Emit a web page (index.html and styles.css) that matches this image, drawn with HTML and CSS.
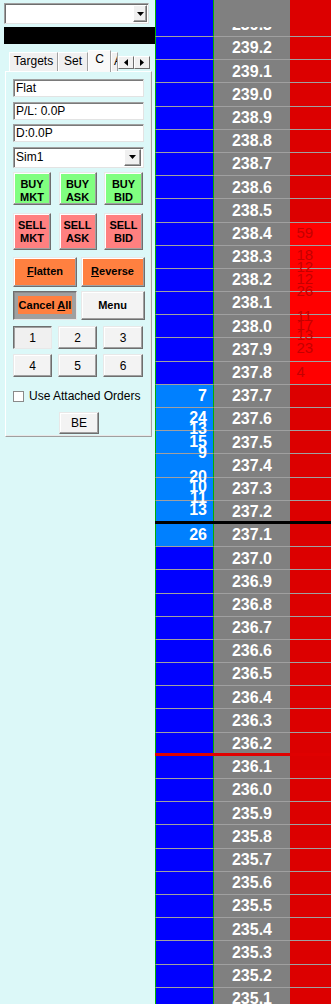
FILE: index.html
```html
<!DOCTYPE html>
<html>
<head>
<meta charset="utf-8">
<link rel="stylesheet" href="styles.css">
</head>
<body>
<div class="app">
  <aside class="side">
    <div class="combo combo--top">
      <span class="combo-text"></span>
      <span class="combo-btn"><svg width="7" height="4" viewBox="0 0 7 4"><path d="M0 0H7L3.5 4Z"/></svg></span>
    </div>
    <div class="blackbar"></div>
    <div class="tabs">
      <div class="tabstrip">
        <div class="tab tab--targets">Targets</div>
        <div class="tab tab--set">Set</div>
        <div class="tab tab--active">C</div>
        <div class="tab tab--clip">A</div>
        <div class="tab-scroll">
          <span class="scroll-btn"><svg width="4" height="7" viewBox="0 0 4 7"><path d="M4 0V7L0 3.5Z"/></svg></span>
          <span class="scroll-btn"><svg width="4" height="7" viewBox="0 0 4 7"><path d="M0 0V7L4 3.5Z"/></svg></span>
        </div>
      </div>
      <div class="panel">
        <div class="field">Flat</div>
        <div class="field">P/L: 0.0P</div>
        <div class="field">D:0.0P</div>
        <div class="combo combo--acct">
          <span class="combo-text">Sim1</span>
          <span class="combo-btn"><svg width="7" height="4" viewBox="0 0 7 4"><path d="M0 0H7L3.5 4Z"/></svg></span>
        </div>
        <div class="grid3 row-buy">
          <div class="btn btn--buy">BUY<br>MKT</div>
          <div class="btn btn--buy">BUY<br>ASK</div>
          <div class="btn btn--buy">BUY<br>BID</div>
        </div>
        <div class="grid3 row-sell">
          <div class="btn btn--sell">SELL<br>MKT</div>
          <div class="btn btn--sell">SELL<br>ASK</div>
          <div class="btn btn--sell">SELL<br>BID</div>
        </div>
        <div class="grid2 row-flatten">
          <div class="btn btn--orange btn--single"><span><u>F</u>latten</span></div>
          <div class="btn btn--orange btn--single"><span><u>R</u>everse</span></div>
        </div>
        <div class="grid2 row-cancel">
          <div class="btn btn--cancel btn--single"><span class="cancel-label">Cancel <u>A</u>ll</span></div>
          <div class="btn btn--plain btn--single"><span>Menu</span></div>
        </div>
        <div class="numgrid row-num1">
          <div class="nbtn nbtn--on">1</div>
          <div class="nbtn">2</div>
          <div class="nbtn">3</div>
        </div>
        <div class="numgrid row-num2">
          <div class="nbtn">4</div>
          <div class="nbtn">5</div>
          <div class="nbtn">6</div>
        </div>
        <label class="checkrow"><span class="check"></span><span>Use Attached Orders</span></label>
        <div class="nbtn be">BE</div>
      </div>
    </div>
  </aside>

  <main class="ladder">
    <div class="ladder-head"><div class="c-bid"></div><div class="c-price"></div><div class="c-ask"></div></div>
    <div class="ladder-body">
      <div class="ladder-rows">
        <div class="row"><div class="c-bid"></div><div class="c-price">239.3</div><div class="c-ask"></div></div>
        <div class="row"><div class="c-bid"></div><div class="c-price">239.2</div><div class="c-ask"></div></div>
        <div class="row"><div class="c-bid"></div><div class="c-price">239.1</div><div class="c-ask"></div></div>
        <div class="row"><div class="c-bid"></div><div class="c-price">239.0</div><div class="c-ask"></div></div>
        <div class="row"><div class="c-bid"></div><div class="c-price">238.9</div><div class="c-ask"></div></div>
        <div class="row"><div class="c-bid"></div><div class="c-price">238.8</div><div class="c-ask"></div></div>
        <div class="row"><div class="c-bid"></div><div class="c-price">238.7</div><div class="c-ask"></div></div>
        <div class="row"><div class="c-bid"></div><div class="c-price">238.6</div><div class="c-ask"></div></div>
        <div class="row"><div class="c-bid"></div><div class="c-price">238.5</div><div class="c-ask"></div></div>
        <div class="row row--offer"><div class="c-bid"></div><div class="c-price">238.4</div><div class="c-ask"></div></div>
        <div class="row row--offer"><div class="c-bid"></div><div class="c-price">238.3</div><div class="c-ask"></div></div>
        <div class="row row--offer"><div class="c-bid"></div><div class="c-price">238.2</div><div class="c-ask"></div></div>
        <div class="row row--offer"><div class="c-bid"></div><div class="c-price">238.1</div><div class="c-ask"></div></div>
        <div class="row row--offer"><div class="c-bid"></div><div class="c-price">238.0</div><div class="c-ask"></div></div>
        <div class="row row--offer"><div class="c-bid"></div><div class="c-price">237.9</div><div class="c-ask"></div></div>
        <div class="row row--offer"><div class="c-bid"></div><div class="c-price">237.8</div><div class="c-ask"></div></div>
        <div class="row row--bidhl"><div class="c-bid"></div><div class="c-price">237.7</div><div class="c-ask"></div></div>
        <div class="row row--bidhl"><div class="c-bid"></div><div class="c-price">237.6</div><div class="c-ask"></div></div>
        <div class="row row--bidhl"><div class="c-bid"></div><div class="c-price">237.5</div><div class="c-ask"></div></div>
        <div class="row row--bidhl"><div class="c-bid"></div><div class="c-price">237.4</div><div class="c-ask"></div></div>
        <div class="row row--bidhl"><div class="c-bid"></div><div class="c-price">237.3</div><div class="c-ask"></div></div>
        <div class="row row--bidhl"><div class="c-bid"></div><div class="c-price">237.2</div><div class="c-ask"></div></div>
        <div class="sep sep--black"></div>
        <div class="row row--bidhl"><div class="c-bid"></div><div class="c-price">237.1</div><div class="c-ask"></div></div>
        <div class="row"><div class="c-bid"></div><div class="c-price">237.0</div><div class="c-ask"></div></div>
        <div class="row"><div class="c-bid"></div><div class="c-price">236.9</div><div class="c-ask"></div></div>
        <div class="row"><div class="c-bid"></div><div class="c-price">236.8</div><div class="c-ask"></div></div>
        <div class="row"><div class="c-bid"></div><div class="c-price">236.7</div><div class="c-ask"></div></div>
        <div class="row"><div class="c-bid"></div><div class="c-price">236.6</div><div class="c-ask"></div></div>
        <div class="row"><div class="c-bid"></div><div class="c-price">236.5</div><div class="c-ask"></div></div>
        <div class="row"><div class="c-bid"></div><div class="c-price">236.4</div><div class="c-ask"></div></div>
        <div class="row"><div class="c-bid"></div><div class="c-price">236.3</div><div class="c-ask"></div></div>
        <div class="row"><div class="c-bid"></div><div class="c-price">236.2</div><div class="c-ask"></div></div>
        <div class="sep sep--red"></div>
        <div class="row"><div class="c-bid"></div><div class="c-price">236.1</div><div class="c-ask"></div></div>
        <div class="row"><div class="c-bid"></div><div class="c-price">236.0</div><div class="c-ask"></div></div>
        <div class="row"><div class="c-bid"></div><div class="c-price">235.9</div><div class="c-ask"></div></div>
        <div class="row"><div class="c-bid"></div><div class="c-price">235.8</div><div class="c-ask"></div></div>
        <div class="row"><div class="c-bid"></div><div class="c-price">235.7</div><div class="c-ask"></div></div>
        <div class="row"><div class="c-bid"></div><div class="c-price">235.6</div><div class="c-ask"></div></div>
        <div class="row"><div class="c-bid"></div><div class="c-price">235.5</div><div class="c-ask"></div></div>
        <div class="row"><div class="c-bid"></div><div class="c-price">235.4</div><div class="c-ask"></div></div>
        <div class="row"><div class="c-bid"></div><div class="c-price">235.3</div><div class="c-ask"></div></div>
        <div class="row"><div class="c-bid"></div><div class="c-price">235.2</div><div class="c-ask"></div></div>
        <div class="row"><div class="c-bid"></div><div class="c-price">235.1</div><div class="c-ask"></div></div>
      </div>
      <div class="sizes sizes--bid">
        <span style="top:360.2px">7</span>
        <span style="top:381.7px">24</span>
        <span style="top:393.2px">13</span>
        <span style="top:405.9px">15</span>
        <span style="top:417.2px">9</span>
        <span style="top:440.9px">20</span>
        <span style="top:450.9px">10</span>
        <span style="top:462.2px">11</span>
        <span style="top:474.2px">13</span>
        <span style="top:498.5px">26</span>
      </div>
      <div class="sizes sizes--ask">
        <span style="top:196.9px">59</span>
        <span style="top:219.2px">18</span>
        <span style="top:230.9px">12</span>
        <span style="top:242.5px">12</span>
        <span style="top:255.2px">26</span>
        <span style="top:280.2px">11</span>
        <span style="top:289.2px">17</span>
        <span style="top:299.2px">13</span>
        <span style="top:311.5px">23</span>
        <span style="top:335.9px">4</span>
      </div>
    </div>
  </main>
</div>
</body>
</html>
```
FILE: styles.css
```css
html, body {
  margin: 0;
  padding: 0;
}
body {
  background: #dcf8f8;
  font-family: "Liberation Sans", Arial, sans-serif;
  overflow: hidden;
  color: #000;
}
.app {
  display: flex;
  height: 1004px;
}

/* ---------- left control panel ---------- */
.side {
  width: 155px;
  flex: none;
  box-sizing: border-box;
  padding: 3px 0 0 4px;
  display: flex;
  flex-direction: column;
}
.combo {
  display: flex;
  box-sizing: border-box;
  background: #fff;
  border: 1px solid;
  border-color: #a0a0a0 #e3e3e3 #e3e3e3 #a0a0a0;
  box-shadow: inset 1px 1px #6e6e6e;
  padding: 1px 1px 1px 2px;
  font-size: 12px;
}
.combo-text {
  flex: 1;
  line-height: 17px;
}
.combo-btn {
  flex: none;
  box-sizing: border-box;
  display: flex;
  align-items: center;
  justify-content: center;
  background: #f0f0f0;
  border: 1px solid;
  border-color: #fff #6e6e6e #6e6e6e #fff;
  box-shadow: inset -1px -1px #a0a0a0;
}
.combo--top {
  width: 145px;
  height: 21px;
}
.combo--top .combo-btn {
  width: 14px;
}
.blackbar {
  margin-top: 3px;
  width: 151px;
  height: 17px;
  background: #000;
}

.tabs {
  margin: 6px 0 0 1px;
  width: 147px;
}
.tabstrip {
  display: flex;
  align-items: flex-end;
  height: 21px;
  padding-left: 4px;
}
.tab {
  box-sizing: border-box;
  height: 19px;
  background: #f0f0f0;
  border: 1px solid;
  border-color: #fff #a0a0a0 transparent #fff;
  border-bottom: none;
  font-size: 12px;
  line-height: 16px;
  text-align: center;
  white-space: nowrap;
}
.tab--targets { width: 49px; }
.tab--set { width: 30px; }
.tab--active {
  width: 23px;
  height: 22px;
  margin-bottom: -1px;
  position: relative;
  z-index: 1;
  background: #f9f9f9;
  line-height: 17px;
}
.tab--clip {
  width: 7px;
  overflow: hidden;
  text-align: left;
  padding-left: 2px;
}
.tab-scroll {
  align-self: flex-start;
  margin-top: 6px;
  display: flex;
}
.scroll-btn {
  box-sizing: border-box;
  width: 16px;
  height: 13px;
  display: flex;
  align-items: center;
  justify-content: center;
  background: #f0f0f0;
  border: 1px solid;
  border-color: #fff #6e6e6e #6e6e6e #fff;
}

.panel {
  box-sizing: border-box;
  height: 366px;
  border: 1px solid;
  border-color: #fff #a0a0a0 #a0a0a0 #fff;
  box-shadow: inset -1px -1px #e8e8e8;
  padding: 7px 0 0 7px;
  display: flex;
  flex-direction: column;
  font-size: 12px;
}
.field {
  box-sizing: border-box;
  width: 131px;
  height: 18px;
  margin-bottom: 4.5px;
  background: #fff;
  border: 1px solid;
  border-color: #a0a0a0 #e3e3e3 #e3e3e3 #a0a0a0;
  box-shadow: inset 1px 1px #7a7a7a;
  padding-left: 2px;
  line-height: 16px;
  white-space: nowrap;
}
.combo--acct {
  width: 131px;
  height: 21px;
}
.combo--acct .combo-btn {
  width: 17px;
  margin-right: 1px;
}

.btn {
  box-sizing: border-box;
  border: 1px solid;
  border-color: #e8e8e8 #6e6e6e #6e6e6e #e8e8e8;
  box-shadow: inset -1px -1px #a0a0a0, inset 1px 1px #fff;
  font-weight: bold;
  font-size: 11px;
  line-height: 13px;
  text-align: center;
}
.grid3 {
  width: 130px;
  display: grid;
  grid-template-columns: 38px 38px 39px;
  justify-content: space-between;
}
.row-buy {
  margin-top: 4.2px;
  height: 32px;
}
.row-sell {
  margin-top: 9.6px;
  height: 36.7px;
}
.btn--buy {
  background: #80ff80;
  padding-top: 5.5px;
}
.btn--sell {
  background: #ff8080;
  padding-top: 5px;
}
.grid2 {
  width: 131.5px;
  display: grid;
  grid-template-columns: 64px 64px;
  justify-content: space-between;
}
.row-flatten {
  margin-top: 6.7px;
  height: 30px;
}
.row-cancel {
  margin-top: 4.3px;
  height: 29px;
}
.btn--single {
  display: flex;
  align-items: center;
  justify-content: center;
}
.btn--orange {
  background: #ff8040;
}
.btn--cancel {
  background: #a0a0a0;
  border-color: #6e6e6e #e8e8e8 #e8e8e8 #6e6e6e;
  box-shadow: inset 1px 1px #8a8a8a;
}
.cancel-label {
  background: #ff8040;
  padding: 3px 1px 2px;
}
.btn--plain {
  background: #f3f3f3;
}

.numgrid {
  width: 130px;
  display: grid;
  grid-template-columns: 39px 39.5px 39.7px;
  justify-content: space-between;
  height: 23.3px;
}
.row-num1 { margin-top: 6px; }
.row-num2 { margin-top: 4.7px; }
.nbtn {
  box-sizing: border-box;
  display: flex;
  align-items: center;
  justify-content: center;
  background: #f3f3f3;
  border: 1px solid;
  border-color: #e8e8e8 #6e6e6e #6e6e6e #e8e8e8;
  box-shadow: inset -1px -1px #a0a0a0, inset 1px 1px #fff;
  font-size: 12px;
}
.nbtn--on {
  border-color: #6e6e6e #e8e8e8 #e8e8e8 #6e6e6e;
  box-shadow: inset 1px 1px #a0a0a0;
  background: #f0f0f0;
}
.checkrow {
  margin-top: 13.7px;
  height: 11px;
  display: flex;
  align-items: center;
  gap: 5px;
  font-size: 12px;
  white-space: nowrap;
}
.check {
  flex: none;
  box-sizing: border-box;
  width: 11px;
  height: 11px;
  background: #fff;
  border: 1px solid #8a8a8a;
}
.be {
  margin: 10.3px 0 0 46px;
  width: 40px;
  height: 22px;
}

/* ---------- price ladder ---------- */
.ladder {
  width: 176px;
  flex: none;
  display: flex;
  flex-direction: column;
  height: 1004px;
  overflow: hidden;
}
.ladder-head,
.row {
  display: grid;
  grid-template-columns: 59px 76px 41px;
}
.ladder-head {
  height: 27px;
  flex: none;
}
.ladder-body {
  position: relative;
  flex: 1;
  overflow: hidden;
}
.ladder-rows {
  margin-top: -14.2px;
}
.row {
  height: 23.2px;
}
.row > div {
  box-sizing: border-box;
  border-top: 1px solid #a0a0a0;
}
.c-bid {
  background: #0000ff;
  border-left: 1px solid #00b000;
  border-right: 1px solid #00b000;
}
.row > .c-bid {
  border-left: 1px solid #00b000;
  border-right: 1px solid #00b000;
}
.c-price {
  background: #808080;
  color: #fff;
  font-weight: bold;
  font-size: 16px;
  line-height: 22.2px;
  padding-top: 0.4px;
  text-align: center;
}
.c-ask {
  background: #dc0000;
}
.row--offer .c-ask {
  background: #ff0000;
}
.row--bidhl .c-bid {
  background: #0080ff;
}
.sep {
  position: relative;
  z-index: 2;
  height: 3px;
  margin: -2.2px 0 -0.8px;
}
.sep--black { background: #000; }
.sep--red { background: #e00000; }

.sizes {
  position: absolute;
  top: 0;
  z-index: 1;
}
.sizes span {
  position: absolute;
  line-height: 18px;
  white-space: nowrap;
}
.sizes--bid {
  left: 0;
  width: 58px;
}
.sizes--bid span {
  right: 6px;
  color: #fff;
  font-weight: bold;
  font-size: 16px;
}
.sizes--ask {
  left: 141.5px;
  width: 34px;
}
.sizes--ask span {
  left: 0;
  color: #c40000;
  font-size: 15px;
}
```
